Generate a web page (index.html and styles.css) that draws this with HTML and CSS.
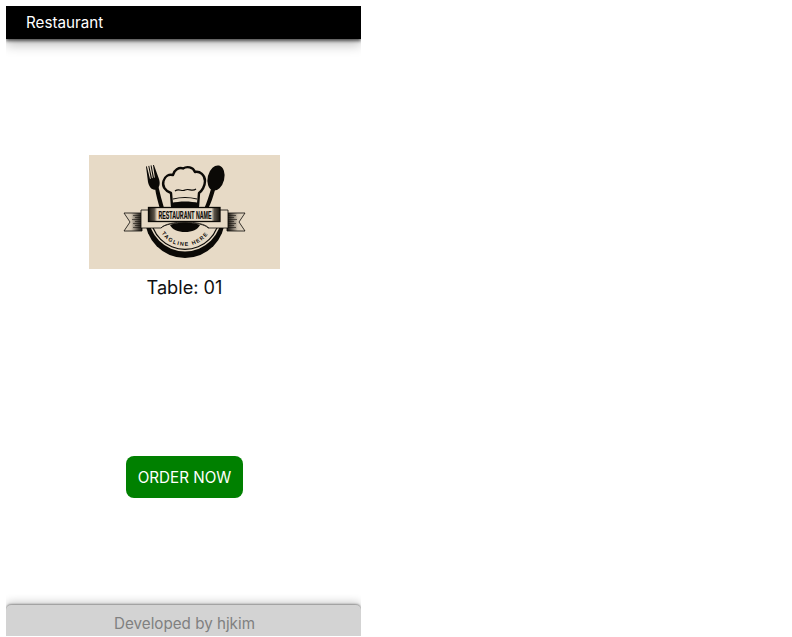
FILE: index.html
```html
<!DOCTYPE html>
<html lang="en">
<head>
<meta charset="utf-8">
<title>Restaurant</title>
<link rel="stylesheet" href="styles.css">
</head>
<body>
<div class="app">
  <header class="topbar">Restaurant</header>
  <main class="content">
    <svg class="logo" viewBox="0 0 191 114" width="191" height="114" role="img" aria-label="Restaurant logo">
      <defs>
        <path id="tagline-arc" d="M68 63 A28 28 0 0 0 124 63"/>
        <clipPath id="lower"><rect x="40" y="62" width="110" height="50"/></clipPath>
        <linearGradient id="tail-left" x1="0" x2="1" y1="0" y2="0">
          <stop offset="0" stop-color="#e7dac6"/>
          <stop offset=".4" stop-color="#d5c9b6"/>
          <stop offset=".8" stop-color="#4a443c"/>
          <stop offset="1" stop-color="#15120e"/>
        </linearGradient>
        <linearGradient id="tail-right" x1="1" x2="0" y1="0" y2="0">
          <stop offset="0" stop-color="#e7dac6"/>
          <stop offset=".4" stop-color="#d5c9b6"/>
          <stop offset=".8" stop-color="#4a443c"/>
          <stop offset="1" stop-color="#15120e"/>
        </linearGradient>
        <linearGradient id="plaque-fill" x1="0" x2="1" y1="0" y2="0">
          <stop offset="0" stop-color="#15120e"/>
          <stop offset=".08" stop-color="#5a5248"/>
          <stop offset=".12" stop-color="#e7dac6"/>
          <stop offset=".88" stop-color="#e7dac6"/>
          <stop offset=".92" stop-color="#5a5248"/>
          <stop offset="1" stop-color="#15120e"/>
        </linearGradient>
      </defs>
      <rect class="bg" width="191" height="114"/>
      <!-- plate rings -->
      <g clip-path="url(#lower)">
        <circle class="ink" cx="96" cy="63" r="40"/>
        <circle class="bg" cx="96" cy="60" r="36.500"/>
        <circle class="ink" cx="96" cy="60" r="35"/>
        <circle class="bg" cx="96" cy="60" r="33.800"/>
      </g>
      <text class="tagline"><textPath href="#tagline-arc" startOffset="50%" text-anchor="middle">TAGLINE HERE</textPath></text>
      <!-- fork -->
      <path class="ink" d="M66 33 C67 40 69 47 71 54 L75 53 C73 46 71 39 69.500 32Z"/>
      <path class="ink" d="M57 11.500 L57.800 11.300 L61 24 L61.800 23.800 L59.300 11 L60.200 10.800 L63 23.300 L63.800 23.100 L61.600 10.500 L62.500 10.300 L65 22.700 L65.800 22.500 L64 10.100 L64.900 10 L70 24 C71.500 29 70.500 33 67 34.500 C63 35.500 60 32 59 27Z"/>
      <!-- spoon -->
      <path class="ink" d="M115 54 C118 47 120 41 122 34 L126 35 C124 42 122 48 119 54Z"/>
      <ellipse class="ink" cx="127" cy="23" rx="8.300" ry="12.800" transform="rotate(14 127 23)"/>
      <!-- chef hat -->
      <path class="hat" d="M83 51 L82 38 C76 36 73 31 74.500 26 C76 21 80 19 84 20 C85 15 90 12 94 13.500 C98 11 104 12 106 17 C111 16 116 20 116 26 C116 31 113 36 110 38 L109 51Z"/>
      <path class="ink-line" d="M86 36 C90 33 93 37 96 35 C100 33 103 37 107 34"/>
      <path class="ink-line" d="M84 44 C92 42 100 42 108 44"/>
      <path class="ink" d="M82 48 C91 46 101 46 110 48 L110 53 L82 53Z"/>
      <!-- ribbon -->
      <path class="tail" d="M35 58 L53 58 L53 76 L35 76 L41 67Z"/>
      <path class="tail-r" d="M156 58 L138 58 L138 76 L156 76 L150 67Z"/>
      <path class="streaks" d="M44 60.500H52M46 62.500H52M43 64.500H52M46 66.500H52M44 68.500H52M46 70.500H52M44 72.500H52M139 60.500H147M139 62.500H145M139 64.500H148M139 66.500H145M139 68.500H147M139 70.500H145M139 72.500H147"/>
      <path class="band" d="M52 55 H139 V73 H119 C114 66 78 66 72 73 H52Z"/>
      <path class="ink" d="M81 70 C88 66.500 104 66.500 111 70 C109 74.500 103 77 96 77 C89 77 83 74.500 81 70Z"/>
      <path class="ring-thin" d="M72 73 C79 65 113 65 120 73"/>
      <rect class="plaque" x="59.500" y="52.500" width="71.500" height="14"/>
      <text class="name" x="96" y="64" text-anchor="middle" textLength="53" lengthAdjust="spacingAndGlyphs">RESTAURANT NAME</text>
    </svg>
    <p class="table-label">Table: 01</p>
    <button class="order" type="button">ORDER NOW</button>
  </main>
  <footer class="footer">Developed by hjkim</footer>
</div>
</body>
</html>
```

FILE: styles.css
```css
html, body {
  height: 100%;
  margin: 0;
  background: #fff;
  overflow: hidden;
}

body {
  padding: 6px 0 0 6px;
  box-sizing: border-box;
  font-family: Inter, "Noto Sans", sans-serif;
}

.app {
  width: 355px;
  height: 630px;
  display: flex;
  flex-direction: column;
  overflow: hidden;
}

.topbar {
  flex: none;
  height: 33px;
  padding: 0 0 1px 20px;
  box-sizing: border-box;
  display: flex;
  align-items: center;
  background: #000;
  color: #fff;
  font-size: 15.200px;
  box-shadow: 0 2px 3px rgba(0, 0, 0, .6), 0 6px 12px rgba(0, 0, 0, .25);
  position: relative;
}

.content {
  flex: 1;
  display: flex;
  flex-direction: column;
  align-items: center;
  padding: 116px 0 0 2px;
}

.logo {
  display: block;
  flex: none;
}

.bg { fill: #e7dac6; }
.ink { fill: #0b0906; }
.ring-thin { fill: none; stroke: #0b0906; stroke-width: .7; }
.hat { fill: #e7dac6; stroke: #0b0906; stroke-width: 2.400; stroke-linejoin: round; }
.ink-line { fill: none; stroke: #0b0906; stroke-width: 1.200; }
.tail { fill: url(#tail-left); stroke: #0b0906; stroke-width: .8; }
.tail-r { fill: url(#tail-right); stroke: #0b0906; stroke-width: .8; }
.streaks { fill: none; stroke: #15120e; stroke-width: .6; }
.band { fill: #e7dac6; stroke: #0b0906; stroke-width: .8; }
.plaque { fill: url(#plaque-fill); stroke: #0b0906; stroke-width: 1.300; }

.name {
  font-family: "Liberation Sans Narrow", "Liberation Sans", sans-serif;
  font-weight: 700;
  font-size: 10px;
  fill: #0b0906;
  stroke: #0b0906;
  stroke-width: .2;
}

.tagline {
  font-family: "Liberation Sans", sans-serif;
  font-weight: 700;
  font-size: 5.400px;
  letter-spacing: 1.300px;
  fill: #0b0906;
}

.table-label {
  margin: 6px 0 0;
  font-size: 18.200px;
  line-height: 24px;
  color: #111;
}

.order {
  margin-top: 157px;
  width: 117px;
  height: 42px;
  border: 0;
  border-radius: 8px;
  background: #008000;
  color: #fff;
  font-family: inherit;
  font-size: 15.200px;
  padding: 0;
}

.footer {
  flex: none;
  height: 31px;
  padding: 5px 0 0 2px;
  box-sizing: border-box;
  display: flex;
  align-items: center;
  justify-content: center;
  background: #d3d3d3;
  color: #808080;
  font-size: 15.200px;
  border-radius: 5px 5px 0 0;
  box-shadow: 0 -1px 2px rgba(0, 0, 0, .35), 0 -3px 8px rgba(0, 0, 0, .2);
}
```
